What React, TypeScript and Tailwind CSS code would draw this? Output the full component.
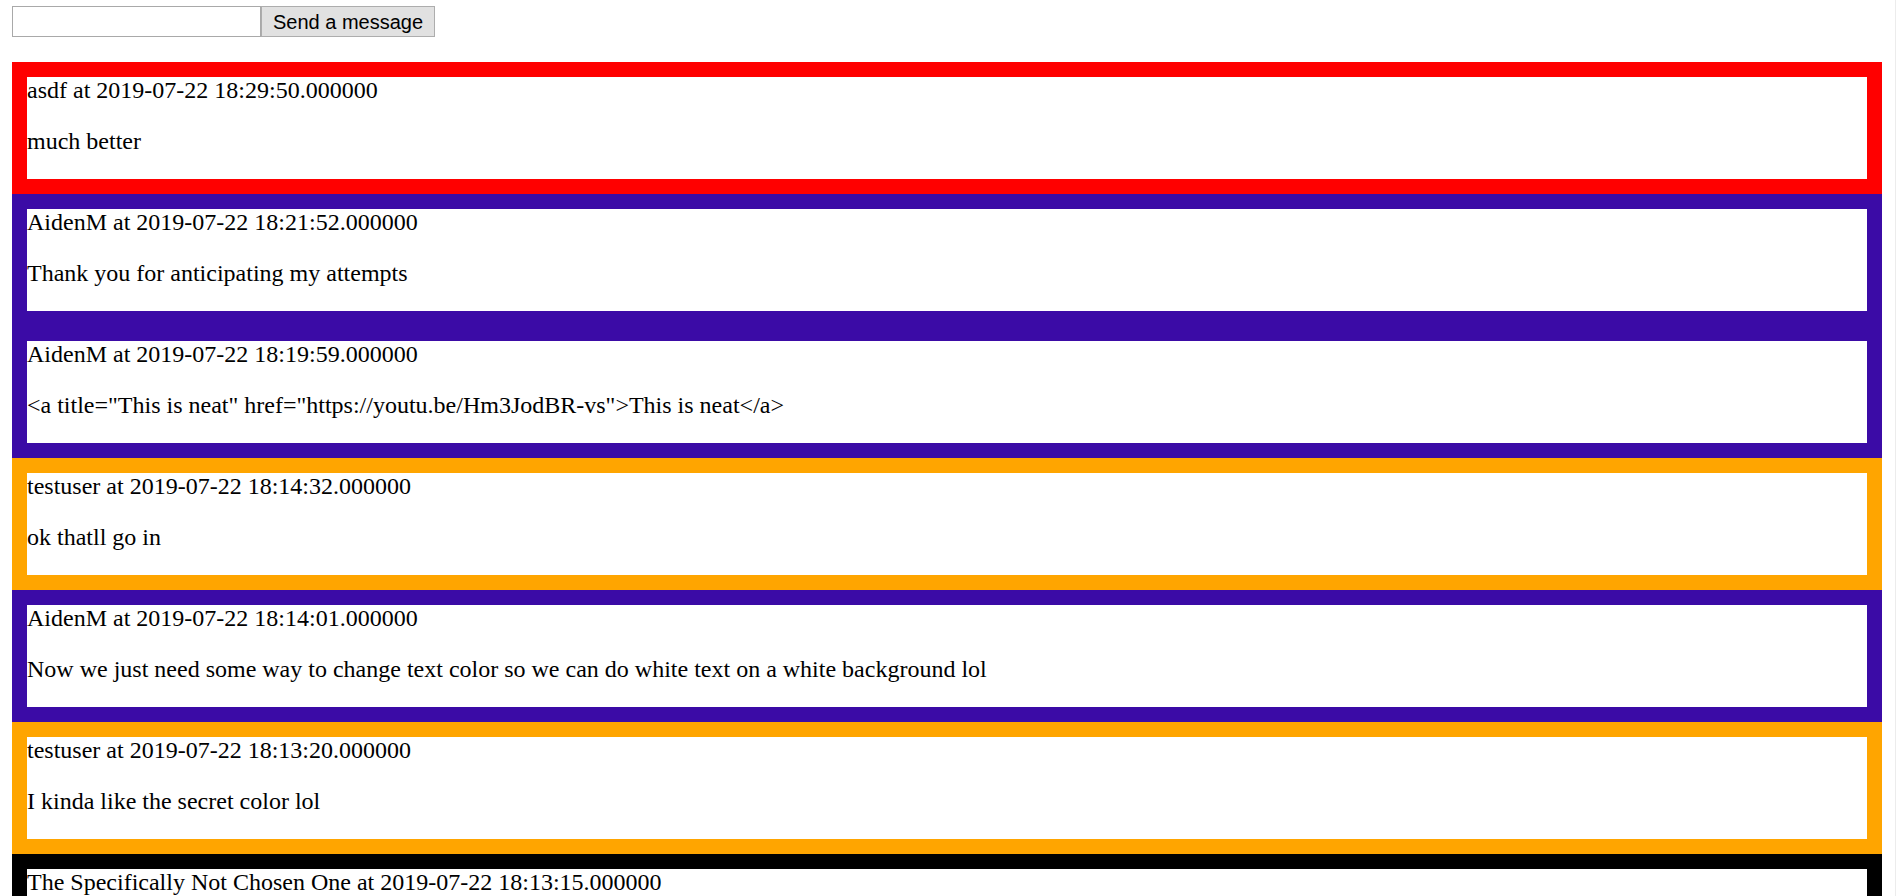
const messages = [
  { user: "asdf", time: "2019-07-22 18:29:50.000000", text: "much better", color: "border-[#ff0000]" },
  { user: "AidenM", time: "2019-07-22 18:21:52.000000", text: "Thank you for anticipating my attempts", color: "border-[#3b0ba6]" },
  { user: "AidenM", time: "2019-07-22 18:19:59.000000", text: '<a title="This is neat" href="https://youtu.be/Hm3JodBR-vs">This is neat</a>', color: "border-[#3b0ba6]" },
  { user: "testuser", time: "2019-07-22 18:14:32.000000", text: "ok thatll go in", color: "border-[#ffa500]" },
  { user: "AidenM", time: "2019-07-22 18:14:01.000000", text: "Now we just need some way to change text color so we can do white text on a white background lol", color: "border-[#3b0ba6]" },
  { user: "testuser", time: "2019-07-22 18:13:20.000000", text: "I kinda like the secret color lol", color: "border-[#ffa500]" },
  { user: "The Specifically Not Chosen One", time: "2019-07-22 18:13:15.000000", text: "hi", color: "border-black" },
]

export default function App() {
  return (
    <div className="h-[896px] overflow-hidden bg-white border-r border-[#ececec] text-black">
      <form className="flex pl-3 pt-[6px]" onSubmit={(e) => e.preventDefault()}>
        <input
          type="text"
          className="h-[31px] w-[249px] border border-[#a9a9a9] bg-white px-1 outline-none"
        />
        <button
          type="submit"
          className="h-[31px] w-[174px] border border-[#adadad] bg-[#e1e1e1] text-[20px] leading-none text-black"
          style={{ fontFamily: '"Liberation Sans", Arial, sans-serif' }}
        >
          Send a message
        </button>
      </form>
      <div className="mt-[25px] ml-3 mr-[13px] flex flex-col">
        {messages.map((m, i) => (
          <div
            key={i}
            className={`border-[15px] ${m.color} bg-white text-[24px] leading-[27px]`}
            style={{ fontFamily: '"Liberation Serif", "Times New Roman", serif' }}
          >
            <div>
              {m.user} at {m.time}
            </div>
            <p className="my-6">{m.text}</p>
          </div>
        ))}
      </div>
    </div>
  )
}
